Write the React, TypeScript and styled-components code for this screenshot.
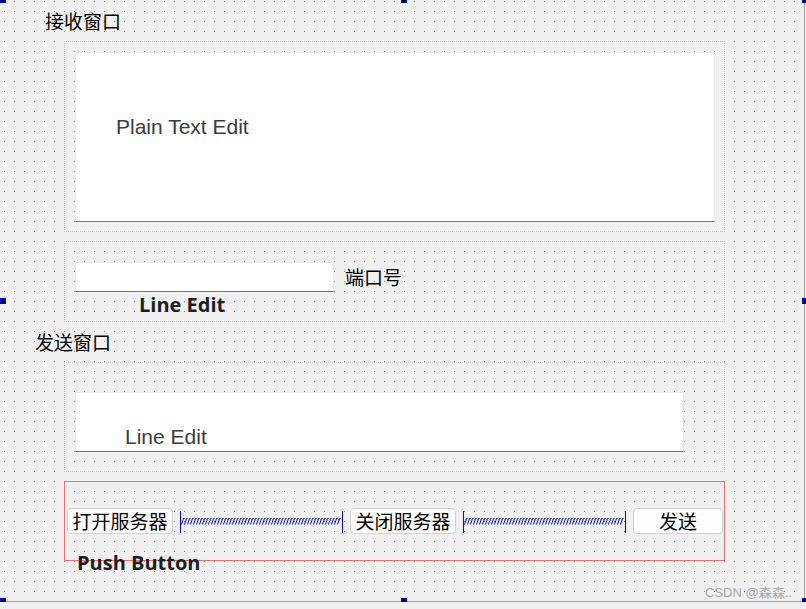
import { createGlobalStyle, styled } from 'styled-components';

const GlobalStyle = createGlobalStyle`
  html, body {
    margin: 0;
    padding: 0;
    background: #f0f0f0;
    overflow: hidden;
  }
  * {
    box-sizing: border-box;
  }
`;

const CJK = `"Noto Sans CJK SC", "Liberation Serif", serif`;

// spring drawn by Qt Designer for a horizontal spacer
const Spacer = ({ width }: { width: number }) => {
  let d = '';
  for (let x = 1.5; x < width - 3; x += 3) {
    d += `M${x} 13.5 L${x + 2} 7.5 L${x + 3} 7.5 `;
  }
  return (
    <SpacerSvg width={width} height={22} viewBox={`0 0 ${width} 22`}>
      <line x1={0.5} y1={0} x2={0.5} y2={22} stroke="#0000ff" strokeWidth={1} />
      <line x1={width - 0.5} y1={0} x2={width - 0.5} y2={22} stroke="#0000ff" strokeWidth={1} />
      <path d={d} stroke="#0000ff" strokeWidth={1} fill="none" />
    </SpacerSvg>
  );
};

const HANDLES: { left: number; top: number }[] = [
  { left: 0, top: -3 },
  { left: 401, top: -3 },
  { left: 802, top: -3 },
  { left: 0, top: 298 },
  { left: 802, top: 298 },
  { left: 0, top: 598 },
  { left: 401, top: 598 },
  { left: 802, top: 598 },
];

const App = () => {
  return (
    <>
      <GlobalStyle />
      <Form>
        <Caption height={41} indent={45}>
          {'接收窗口'}
        </Caption>
        <LayoutBox height={191} padTop={10}>
          <PlainTextEdit>
            <WidgetName>{'Plain Text Edit'}</WidgetName>
          </PlainTextEdit>
        </LayoutBox>
        <LayoutBox height={81} padTop={20} gapTop={9}>
          <PortRow>
            <LineEdit width={259} height={30} />
            <PortLabel>{'端口号'}</PortLabel>
          </PortRow>
          <HintText indent={64} offset={3}>
            {'Line Edit'}
          </HintText>
        </LayoutBox>
        <Caption height={40} indent={35}>
          {'发送窗口'}
        </Caption>
        <LayoutBox height={110} padTop={29}>
          <LineEdit width={609} height={60}>
            <SendName>{'Line Edit'}</SendName>
          </LineEdit>
        </LayoutBox>
        <ButtonLayout>
          <PushButton width={106}>{'打开服务器'}</PushButton>
          <Spacer width={163} />
          <PushButton width={106}>{'关闭服务器'}</PushButton>
          <Spacer width={163} />
          <PushButton width={90}>{'发送'}</PushButton>
        </ButtonLayout>
        <HintText indent={77} offset={-8}>
          {'Push Button'}
        </HintText>
        {HANDLES.map((h, index) => (
          <Handle key={index} style={{ left: h.left, top: h.top }} />
        ))}
        <Watermark>{'CSDN @森森..'}</Watermark>
      </Form>
    </>
  );
};

export default App;

const Form = styled.div`
  position: relative;
  display: flex;
  flex-direction: column;
  width: 805px;
  height: 602px;
  border-right: 1px solid #a0a0a0;
  border-bottom: 1px solid #a0a0a0;
  background-color: #f0f0f0;
  background-image: linear-gradient(to bottom, transparent 1px, #f0f0f0 1px),
    linear-gradient(to right, #8e8e8e 1px, #f0f0f0 1px);
  background-size: 10px 10px;
  background-position: 4px 1px;
`;

const Caption = styled.div<{ height: number; indent: number }>`
  height: ${p => p.height}px;
  line-height: ${p => p.height}px;
  padding-left: ${p => p.indent}px;
  font-family: ${CJK};
  font-size: 19px;
  color: #000;
`;

const LayoutBox = styled.div<{ height: number; padTop: number; gapTop?: number }>`
  display: flex;
  flex-direction: column;
  align-items: flex-start;
  flex: none;
  width: 661px;
  height: ${p => p.height}px;
  margin-left: 64px;
  margin-top: ${p => p.gapTop || 0}px;
  padding: ${p => p.padTop}px 0 0 10px;
  border: 1px dotted #cacaca;
`;

const PlainTextEdit = styled.div`
  width: 640px;
  height: 170px;
  background: #fff;
  border: 1px solid #ebebeb;
  border-bottom: 1px solid #7a7a7a;
  padding: 62px 0 0 40px;
`;

const WidgetName = styled.div`
  font-family: 'Liberation Sans', Arial, sans-serif;
  font-size: 21px;
  line-height: 24px;
  color: #3c3c3c;
`;

const PortRow = styled.div`
  display: flex;
  align-items: center;
  gap: 11px;
`;

const LineEdit = styled.div<{ width: number; height: number }>`
  width: ${p => p.width}px;
  height: ${p => p.height}px;
  background: #fff;
  border: 1px solid #e8e8e8;
  border-bottom: 1px solid #767676;
`;

const PortLabel = styled.span`
  font-family: ${CJK};
  font-size: 19px;
  line-height: 30px;
  color: #000;
`;

const SendName = styled(WidgetName)`
  padding: 33px 0 0 49px;
  line-height: 22px;
`;

const HintText = styled.div<{ indent: number; offset: number }>`
  margin-left: ${p => p.indent}px;
  margin-top: ${p => p.offset}px;
  font-family: 'Open Sans', 'Liberation Sans', sans-serif;
  font-weight: 700;
  font-size: 20px;
  line-height: 20px;
  color: #1e1e1e;
`;

const ButtonLayout = styled.div`
  display: flex;
  align-items: center;
  gap: 7px;
  flex: none;
  width: 661px;
  height: 80px;
  margin: 9px 0 0 64px;
  padding-left: 2px;
  border: 1px solid #f26e6e;
`;

const PushButton = styled.button<{ width: number }>`
  width: ${p => p.width}px;
  height: 26px;
  padding: 0;
  background: #fdfdfd;
  border: 1px solid #d2d2d2;
  border-radius: 4px;
  font-family: ${CJK};
  font-size: 19px;
  line-height: 24px;
  color: #000;
`;

const SpacerSvg = styled.svg`
  display: block;
  flex: none;
  margin-top: 2px;
`;

const Handle = styled.div`
  position: absolute;
  width: 6px;
  height: 6px;
  background: #000;
  border: 1px solid #0000ff;
`;

const Watermark = styled.div`
  position: absolute;
  left: 705px;
  top: 584px;
  font-family: 'Liberation Sans', 'Noto Sans CJK SC', sans-serif;
  font-size: 13px;
  line-height: 18px;
  color: #a9a9a9;
`;
